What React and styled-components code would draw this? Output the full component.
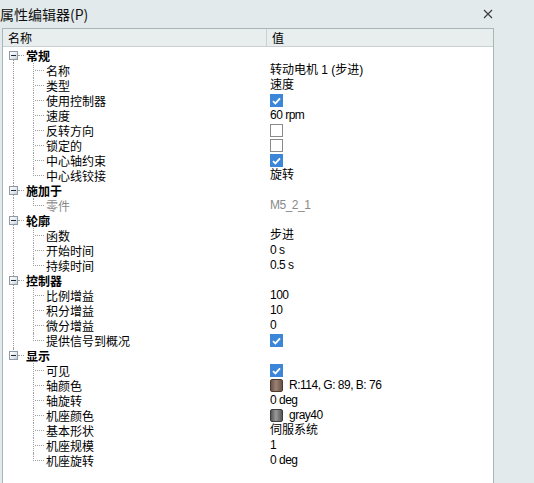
import React from "react";
import styled, { createGlobalStyle } from "styled-components";

const Global = createGlobalStyle`
  html, body { margin: 0; padding: 0; }
  body {
    background: #e3eaeb;
    font-family: "Liberation Sans", "Noto Sans CJK SC", sans-serif;
    color: #000;
    overflow: hidden;
  }
`;

const Dialog = styled.div`
  width: 534px;
  height: 483px;
  display: flex;
  flex-direction: column;
  background: #e3eaeb;
`;

const TitleBar = styled.div`
  height: 28px;
  display: flex;
  align-items: center;
  justify-content: space-between;
  padding-right: 41px;
  flex: none;
`;

const Title = styled.div`
  font-family: "Noto Sans CJK SC", sans-serif;
  font-size: 14px;
  line-height: 28px;
  margin-top: -1px;
  color: #111;
`;

const Close = styled.div`
  width: 10px;
  height: 10px;
  display: flex;
  margin-top: -1px;
`;

const Panel = styled.div`
  margin-left: 2px;
  width: 490px;
  flex: 1;
  background: #fff;
  border: 1px solid #a9b5b7;
  border-bottom: none;
  display: flex;
  flex-direction: column;
`;

const Header = styled.div`
  display: grid;
  grid-template-columns: 264px 1fr;
  height: 17px;
  background: #e8edee;
  border-bottom: 1px solid #c9d1d3;
  font-family: "Noto Sans CJK SC", sans-serif;
  font-size: 12px;
  line-height: 17px;
`;

const HeadCell = styled.div`
  padding-left: ${p => p.$pad}px;
  border-right: ${p => (p.$divider ? "1px solid #c9d1d3" : "none")};
`;

const Body = styled.div`
  padding-top: 1px;
`;

const Row = styled.div`
  display: grid;
  grid-template-columns: 264px 1fr;
  height: 15px;
  font-size: 12px;
  line-height: 15px;
`;

const NameCell = styled.div`
  display: flex;
  align-items: stretch;
  font-family: "Noto Sans CJK SC", sans-serif;
  white-space: nowrap;
`;

const Trunk = styled.span`
  position: relative;
  width: 23px;
  flex: none;
  &::before {
    content: "";
    display: ${p => (p.$line ? "block" : "none")};
    position: absolute;
    left: 10px;
    top: ${p => (p.$top ? "0" : "50%")};
    bottom: ${p => (p.$bottom ? "0" : "50%")};
    border-left: 1px dotted #a0a0a0;
  }
  &::after {
    content: "";
    display: ${p => (p.$stub ? "block" : "none")};
    position: absolute;
    left: 15px;
    width: 6px;
    top: 7px;
    border-top: 1px dotted #a0a0a0;
  }
`;

const Toggle = styled.span`
  position: absolute;
  left: 6px;
  top: 3px;
  width: 7px;
  height: 7px;
  border: 1px solid #8e9ba6;
  background: linear-gradient(135deg, #ffffff 0%, #e6e9ec 60%, #c9ced3 100%);
  z-index: 1;
  &::after {
    content: "";
    position: absolute;
    left: 1px;
    top: 3px;
    width: 5px;
    height: 1px;
    background: #1b2a3a;
  }
`;

const Branch = styled.span`
  position: relative;
  width: 18px;
  flex: none;
  &::before {
    content: "";
    position: absolute;
    left: 7px;
    top: 0;
    bottom: ${p => (p.$last ? "7px" : "0")};
    border-left: 1px dotted #a0a0a0;
  }
  &::after {
    content: "";
    position: absolute;
    left: 9px;
    width: 9px;
    top: 7px;
    border-top: 1px dotted #a0a0a0;
  }
`;

const GroupLabel = styled.span`
  font-weight: bold;
  color: #000;
`;

const ItemLabel = styled.span`
  margin-left: 2px;
  color: ${p => (p.$muted ? "#8a8a8a" : "#000")};
`;

const ValueCell = styled.div`
  padding-left: 3px;
  display: flex;
  align-items: center;
  gap: 6px;
  white-space: nowrap;
  color: ${p => (p.$muted ? "#8a8a8a" : "#000")};
  letter-spacing: ${p => (p.$tight ? "-0.5px" : "0")};
`;

const Check = styled.span`
  width: 13px;
  height: 13px;
  box-sizing: border-box;
  display: flex;
  align-items: center;
  justify-content: center;
  background: ${p => (p.$on ? "#3b86d8" : "#fff")};
  border: 1px solid ${p => (p.$on ? "#3b86d8" : "#8a8a8a")};
`;

const Swatch = styled.span`
  width: 13px;
  height: 13px;
  box-sizing: border-box;
  border-radius: 2px;
  border: 1px solid ${p => p.$edge};
  background: linear-gradient(
    90deg,
    ${p => p.$color} 0%,
    ${p => p.$light} 45%,
    ${p => p.$color} 100%
  );
`;

const groups = [
  {
    title: "常规",
    items: [
      { name: "名称", text: "转动电机 1 (步进)" },
      { name: "类型", text: "速度" },
      { name: "使用控制器", check: true },
      { name: "速度", text: "60 rpm" },
      { name: "反转方向", check: false },
      { name: "锁定的", check: false },
      { name: "中心轴约束", check: true },
      { name: "中心线铰接", text: "旋转" },
    ],
  },
  {
    title: "施加于",
    items: [{ name: "零件", text: "M5_2_1", muted: true }],
  },
  {
    title: "轮廓",
    items: [
      { name: "函数", text: "步进" },
      { name: "开始时间", text: "0 s" },
      { name: "持续时间", text: "0.5 s" },
    ],
  },
  {
    title: "控制器",
    items: [
      { name: "比例增益", text: "100" },
      { name: "积分增益", text: "10" },
      { name: "微分增益", text: "0" },
      { name: "提供信号到概况", check: true },
    ],
  },
  {
    title: "显示",
    items: [
      { name: "可见", check: true },
      {
        name: "轴颜色",
        text: "R:114, G: 89, B: 76",
        swatch: { color: "#6b5244", light: "#9a8376", edge: "#4e3b30" },
      },
      { name: "轴旋转", text: "0 deg" },
      {
        name: "机座颜色",
        text: "gray40",
        swatch: { color: "#555", light: "#9a9a9a", edge: "#3d3d3d" },
      },
      { name: "基本形状", text: "伺服系统" },
      { name: "机座规模", text: "1" },
      { name: "机座旋转", text: "0 deg" },
    ],
  },
];

const isLatin = s => /^[\x00-\x7f]*$/.test(s);

function Tick() {
  return (
    <svg width="9" height="8" viewBox="0 0 9 8">
      <path d="M1 4.2 L3.4 6.4 L8 1.4" fill="none" stroke="#fff" strokeWidth="1.8" />
    </svg>
  );
}

function Value({ item }) {
  if (item.check !== undefined) {
    return (
      <ValueCell>
        <Check $on={item.check}>{item.check && <Tick />}</Check>
      </ValueCell>
    );
  }
  return (
    <ValueCell $muted={item.muted} $tight={isLatin(item.text)}>
      {item.swatch && (
        <Swatch
          $color={item.swatch.color}
          $light={item.swatch.light}
          $edge={item.swatch.edge}
        />
      )}
      <span>{item.text}</span>
    </ValueCell>
  );
}

function Group({ group, first, last }) {
  return (
    <>
      <Row>
        <NameCell>
          <Trunk $line={!last || !first} $top={!first} $bottom={!last} $stub>
            <Toggle />
          </Trunk>
          <GroupLabel>{group.title}</GroupLabel>
        </NameCell>
        <ValueCell />
      </Row>
      {group.items.map((item, i) => (
        <Row key={item.name}>
          <NameCell>
            <Trunk $line={!last} $top $bottom />
            <Branch $last={i === group.items.length - 1} />
            <ItemLabel $muted={item.muted}>{item.name}</ItemLabel>
          </NameCell>
          <Value item={item} />
        </Row>
      ))}
    </>
  );
}

export default function App() {
  return (
    <Dialog>
      <Global />
      <TitleBar>
        <Title>属性编辑器(P)</Title>
        <Close>
          <svg width="10" height="10" viewBox="0 0 10 10">
            <path d="M1 1 L9 9 M9 1 L1 9" stroke="#3a3a3a" strokeWidth="1.1" />
          </svg>
        </Close>
      </TitleBar>
      <Panel>
        <Header>
          <HeadCell $pad={5} $divider>名称</HeadCell>
          <HeadCell $pad={5}>值</HeadCell>
        </Header>
        <Body>
          {groups.map((g, i) => (
            <Group
              key={g.title}
              group={g}
              first={i === 0}
              last={i === groups.length - 1}
            />
          ))}
        </Body>
      </Panel>
    </Dialog>
  );
}
